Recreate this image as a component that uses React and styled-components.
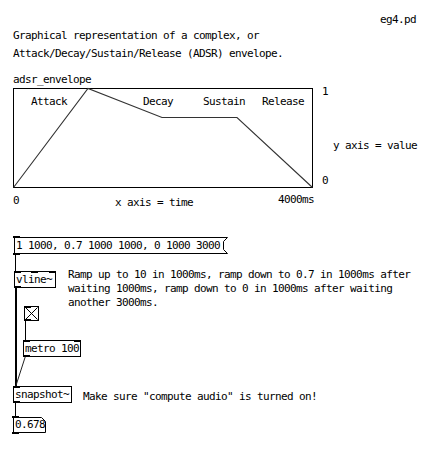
import * as React from "react";
import styled, { createGlobalStyle } from "styled-components";

const GlobalStyle = createGlobalStyle`
  html, body {
    margin: 0;
    padding: 0;
    background: #fff;
  }
  body {
    font-family: "DejaVu Sans Mono", "Liberation Mono", monospace;
    font-size: 11px;
    letter-spacing: -0.62px;
    color: #000;
  }
`;

const Canvas = styled.div`
  position: relative;
  width: 446px;
  height: 458px;
  overflow: hidden;
  background: #fff;
`;

// a Pd comment sitting on the patch canvas
const Comment = styled.div`
  position: absolute;
  left: ${(p) => p.$x}px;
  top: ${(p) => p.$y}px;
  white-space: pre;
  line-height: 14px;
`;

const GraphFrame = styled.div`
  position: absolute;
  left: 13px;
  top: 88px;
  width: 300px;
  height: 100px;
  box-sizing: border-box;
  border: 1px solid #000;

  svg {
    position: absolute;
    left: -1px;
    top: -1px;
    overflow: visible;
  }
`;

const ObjectBox = styled.div`
  position: absolute;
  left: ${(p) => p.$x}px;
  top: ${(p) => p.$y}px;
  width: ${(p) => p.$w}px;
  height: ${(p) => p.$h || 17}px;
  box-sizing: border-box;
  border: 1px solid #000;
  padding-left: 1px;
  line-height: ${(p) => (p.$h || 17) - 2}px;
  white-space: pre;
`;

const Port = styled.span`
  position: absolute;
  ${(p) => (p.$out ? "bottom: -1px;" : "top: -1px;")}
  ${(p) =>
    p.$side === "right"
      ? "right: -1px;"
      : p.$side === "mid"
      ? "left: 50%; margin-left: -4px;"
      : "left: -1px;"}
  width: 7px;
  height: 2px;
  background: #000;
`;

// message / number boxes have no plain rectangle outline, so they draw it
const ShapedBox = styled.div`
  position: absolute;
  left: ${(p) => p.$x}px;
  top: ${(p) => p.$y}px;
  width: ${(p) => p.$w}px;
  height: ${(p) => p.$h}px;
  padding-left: 2px;
  box-sizing: border-box;
  line-height: ${(p) => p.$h}px;
  white-space: pre;

  svg {
    position: absolute;
    left: 0;
    top: 0;
    overflow: visible;
  }
`;

const ToggleBox = styled.div`
  position: absolute;
  left: 24px;
  top: 306px;
  width: 15px;
  height: 15px;
  box-sizing: border-box;
  border: 1px solid #000;

  svg {
    position: absolute;
    left: -1px;
    top: -1px;
  }
`;

const Cords = styled.svg`
  position: absolute;
  left: 0;
  top: 0;
  pointer-events: none;
`;

const MessageBox = ({ x, y, w, h, children }) => (
  <ShapedBox $x={x} $y={y} $w={w} $h={h}>
    <svg width={w + 5} height={h}>
      <polygon
        points={`0.5,0.5 ${w + 4.5},0.5 ${w + 0.5},4.5 ${w + 0.5},${h - 4.5} ${
          w + 4.5
        },${h - 0.5} 0.5,${h - 0.5}`}
        fill="none"
        stroke="#000"
      />
    </svg>
    <Port />
    <Port $out />
    {children}
  </ShapedBox>
);

const NumberBox = ({ x, y, w, h, children }) => (
  <ShapedBox $x={x} $y={y} $w={w} $h={h}>
    <svg width={w} height={h}>
      <polygon
        points={`0.5,0.5 ${w - 4.5},0.5 ${w - 0.5},4.5 ${w - 0.5},${
          h - 0.5
        } 0.5,${h - 0.5}`}
        fill="none"
        stroke="#000"
      />
    </svg>
    <Port />
    <Port $out />
    {children}
  </ShapedBox>
);

const Toggle = () => (
  <ToggleBox>
    <svg width="15" height="15">
      <line x1="1.5" y1="1.5" x2="13.5" y2="13.5" stroke="#000" />
      <line x1="13.5" y1="1.5" x2="1.5" y2="13.5" stroke="#000" />
    </svg>
    <Port />
    <Port $out />
  </ToggleBox>
);

const Envelope = () => (
  <GraphFrame>
    <svg width="300" height="100">
      <polyline
        points="0.5,99.5 75,0.5 149,29.5 224,29.5 299.5,99.5"
        fill="none"
        stroke="#333"
        strokeWidth="1.1"
      />
    </svg>
  </GraphFrame>
);

const App = () => (
  <Canvas>
    <GlobalStyle />
    <Comment $x={380} $y={13}>eg4.pd</Comment>
    <Comment $x={13} $y={29}>Graphical representation of a complex, or</Comment>
    <Comment $x={13} $y={47}>
      Attack/Decay/Sustain/Release (ADSR) envelope.
    </Comment>

    <Comment $x={13} $y={73}>adsr_envelope</Comment>
    <Envelope />
    <Comment $x={31} $y={95}>Attack</Comment>
    <Comment $x={143} $y={95}>Decay</Comment>
    <Comment $x={203} $y={95}>Sustain</Comment>
    <Comment $x={262} $y={95}>Release</Comment>
    <Comment $x={322} $y={85}>1</Comment>
    <Comment $x={333} $y={139}>y axis = value</Comment>
    <Comment $x={322} $y={174}>0</Comment>
    <Comment $x={13} $y={194}>0</Comment>
    <Comment $x={115} $y={196}>x axis = time</Comment>
    <Comment $x={278} $y={193}>4000ms</Comment>

    <Cords width="446" height="458">
      <line x1="15.5" y1="254" x2="15.5" y2="271" stroke="#000" />
      <line x1="16" y1="287" x2="16" y2="387" stroke="#000" strokeWidth="2" />
      <line x1="25.5" y1="321" x2="25.5" y2="340" stroke="#000" />
      <line x1="25.5" y1="356" x2="15.5" y2="387" stroke="#222" />
      <line x1="15.5" y1="403" x2="15.5" y2="417" stroke="#000" />
    </Cords>

    <MessageBox x={14} y={237} w={209} h={17}>
      1 1000, 0.7 1000 1000, 0 1000 3000
    </MessageBox>

    <ObjectBox $x={14} $y={271} $w={42}>
      <Port />
      <Port $side="mid" />
      <Port $side="right" />
      <Port $out />
      vline~
    </ObjectBox>
    <Comment $x={68} $y={268}>
      {"Ramp up to 10 in 1000ms, ramp down to 0.7 in 1000ms after\nwaiting 1000ms, ramp down to 0 in 1000ms after waiting\nanother 3000ms."}
    </Comment>

    <Toggle />

    <ObjectBox $x={23} $y={340} $w={58}>
      <Port />
      <Port $side="right" />
      <Port $out />
      metro 100
    </ObjectBox>

    <ObjectBox $x={13} $y={386} $w={59}>
      <Port />
      <Port $out />
      snapshot~
    </ObjectBox>
    <Comment $x={83} $y={390}>Make sure "compute audio" is turned on!</Comment>

    <NumberBox x={13} y={417} w={33} h={16}>
      0.678
    </NumberBox>
  </Canvas>
);

export default App;
